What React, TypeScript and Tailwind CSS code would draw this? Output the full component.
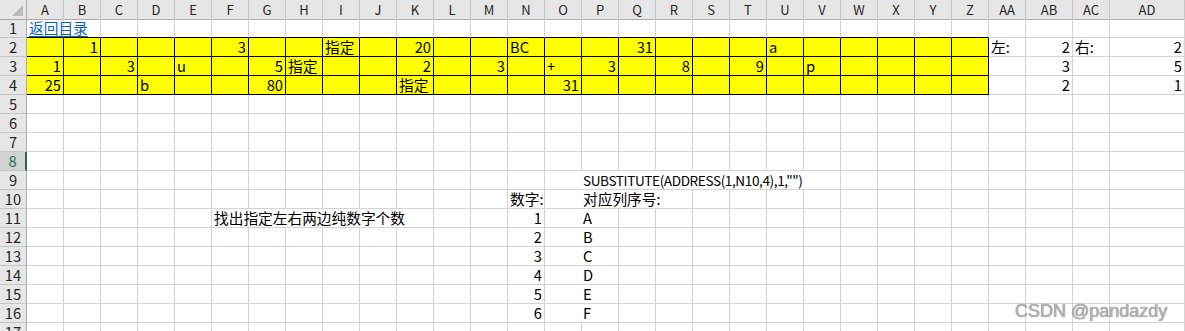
import React from 'react';

const COLS = [
  'A', 'B', 'C', 'D', 'E', 'F', 'G', 'H', 'I', 'J', 'K', 'L', 'M', 'N', 'O',
  'P', 'Q', 'R', 'S', 'T', 'U', 'V', 'W', 'X', 'Y', 'Z', 'AA', 'AB', 'AC', 'AD',
];

const GRID = 'grid grid-cols-[27px_repeat(27,37px)_47px_37px_1fr]';

type Cell = { text: string; align?: 'l' | 'r'; span?: number; pad?: string; link?: boolean; extra?: string };

const cells: Record<string, Cell> = {
  A1: { text: '返回目录', link: true },
  B2: { text: '1' }, F2: { text: '3' }, I2: { text: '指定', align: 'l' }, K2: { text: '20' },
  N2: { text: 'BC', align: 'l' }, Q2: { text: '31' }, U2: { text: 'a', align: 'l' },
  AA2: { text: '左:', align: 'l' }, AB2: { text: '2' }, AC2: { text: '右:', align: 'l' }, AD2: { text: '2' },
  A3: { text: '1' }, C3: { text: '3' }, E3: { text: 'u', align: 'l' }, G3: { text: '5' },
  H3: { text: '指定', align: 'l' }, K3: { text: '2' }, M3: { text: '3' }, O3: { text: '+', align: 'l' },
  P3: { text: '3' }, R3: { text: '8' }, T3: { text: '9' }, V3: { text: 'p', align: 'l' },
  AB3: { text: '3' }, AD3: { text: '5' },
  A4: { text: '25' }, D4: { text: 'b', align: 'l' }, G4: { text: '80' }, K4: { text: '指定', align: 'l' },
  O4: { text: '31' }, AB4: { text: '2' }, AD4: { text: '1' },
  O9: {
    text: 'SUBSTITUTE(ADDRESS(1,N10,4),1,"")', align: 'l', span: 8, pad: 'pl-[38px]',
    extra: 'text-[13.6px] tracking-[-0.4px]',
  },
  N10: { text: '数字:', align: 'l' },
  O10: { text: '对应列序号:', align: 'l', span: 4, pad: 'pl-[38px]' },
  F11: { text: '找出指定左右两边纯数字个数', align: 'l', span: 6 },
};

['A', 'B', 'C', 'D', 'E', 'F'].forEach((l, i) => {
  cells[`N${11 + i}`] = { text: String(i + 1) };
  cells[`O${11 + i}`] = { text: l, align: 'l', span: 2, pad: 'pl-[38px]' };
});

const spanCls: Record<number, string> = {
  1: '', 2: 'col-span-2', 4: 'col-span-4', 6: 'col-span-6', 8: 'col-span-8',
};

function SheetRow({ row }: { row: number }) {
  const out: React.ReactNode[] = [];
  const selected = row === 8;
  out.push(
    <div
      key="h"
      className={
        selected
          ? 'bg-[#d2d2d2] text-[#217346] border-b border-b-[#c6c6c6] border-r-2 border-r-[#217346] text-center'
          : 'bg-[#e6e6e6] text-[#262626] border-b border-b-[#c6c6c6] border-r border-r-[#ababab] text-center'
      }
    >
      {row}
    </div>
  );
  for (let i = 0; i < COLS.length; i++) {
    const key = `${COLS[i]}${row}`;
    const c = cells[key];
    const span = c?.span ?? 1;
    const yellow = row >= 2 && row <= 4 && i < 26;
    const aboveYellow = row === 1 && i < 26;
    let cls = 'whitespace-nowrap overflow-visible border-r border-b ';
    if (yellow) cls += 'bg-[#ffff00] border-black ';
    else if (aboveYellow) cls += 'border-r-[#d4d4d4] border-b-black ';
    else cls += 'border-[#d4d4d4] ';
    cls += spanCls[span] + ' ';
    if (c) {
      cls += c.align === 'l' || c.link ? 'text-left ' : 'text-right ';
      cls += (c.pad ?? (c.align === 'l' || c.link ? 'pl-[2px]' : 'pr-[2px]')) + ' ';
      cls += c.extra ?? '';
    }
    out.push(
      <div key={key} className={cls}>
        {c?.link ? (
          <span className="text-[#0563c1] underline underline-offset-2">{c.text}</span>
        ) : (
          c?.text
        )}
      </div>
    );
    i += span - 1;
  }
  return <div className={`${GRID} h-[19px]`}>{out}</div>;
}

export default function App() {
  const rows = Array.from({ length: 17 }, (_, i) => i + 1);
  return (
    <div className="relative w-[1185px] h-[331px] overflow-hidden bg-white font-['Noto_Sans_CJK_SC',sans-serif] text-[14.7px] leading-[18px] text-black">
      {/* column headers */}
      <div className={`${GRID} h-[19px] bg-[#e6e6e6] text-[#262626] text-[13px]`}>
        <div className="relative border-r border-b border-[#ababab]">
          <div className="absolute right-[3px] bottom-[3px] w-0 h-0 border-l-[11px] border-l-transparent border-b-[11px] border-b-[#b9b9b9]" />
        </div>
        {COLS.map((c) => (
          <div key={c} className="pt-[1px] text-center border-r border-r-[#c6c6c6] border-b border-b-[#ababab]">
            {c}
          </div>
        ))}
      </div>
      {rows.map((r) => (
        <SheetRow key={r} row={r} />
      ))}
      <div className="absolute left-[1015px] top-[300px] font-['Liberation_Sans',sans-serif] text-[18px] leading-[22px] text-[#b4b4b4] [text-shadow:0_0_1px_#666]">
        CSDN @pandazdy
      </div>
    </div>
  );
}
